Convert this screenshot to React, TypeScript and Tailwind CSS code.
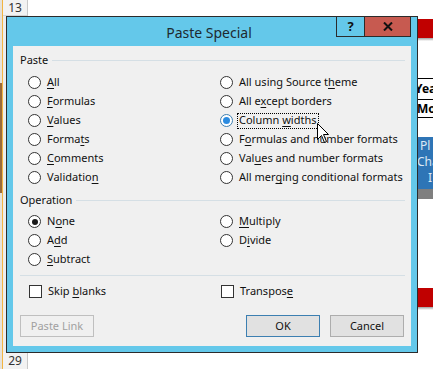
import React from "react";

const FONT = { fontFamily: '"Noto Sans", "Open Sans", sans-serif' };

type LabelParts = [string, string, string];

function Label({ parts, className = "" }: { parts: LabelParts; className?: string }) {
  return (
    <span className={"whitespace-nowrap " + className}>
      {parts[0]}
      <span className="underline underline-offset-[2px] decoration-[1px]">{parts[1]}</span>
      {parts[2]}
    </span>
  );
}

function Radio({
  parts,
  checked = false,
  hover = false,
  focus = false,
}: {
  parts: LabelParts;
  checked?: boolean;
  hover?: boolean;
  focus?: boolean;
}) {
  return (
    <div className="flex h-[19px] items-center">
      <div
        className={
          "flex h-[13px] w-[13px] shrink-0 items-center justify-center rounded-full border bg-white " +
          (hover ? "border-[#3c7fb1]" : "border-[#333333]")
        }
      >
        {checked && !hover && <div className="h-[6px] w-[6px] rounded-full bg-[#1a1a1a]" />}
        {hover && <div className="h-[7px] w-[7px] rounded-full bg-[#2b8be0]" />}
      </div>
      <div
        className={
          "ml-[4px] flex h-[16px] items-center px-[1px] " +
          (focus ? "border border-dotted border-black" : "border border-transparent")
        }
      >
        <Label parts={parts} />
      </div>
    </div>
  );
}

function Check({ parts }: { parts: LabelParts }) {
  return (
    <div className="flex h-[19px] items-center">
      <div className="h-[13px] w-[13px] shrink-0 border border-[#333333] bg-white" />
      <div className="ml-[4px] flex h-[16px] items-center border border-transparent px-[1px]">
        <Label parts={parts} />
      </div>
    </div>
  );
}

function GroupHeader({ text }: { text: string }) {
  return (
    <div className="flex h-[15px] items-center">
      <span className="pr-[4px]">{text}</span>
      <div className="h-px flex-1 bg-[#d5dfe5]" />
    </div>
  );
}

function Button({
  children,
  kind = "normal",
}: {
  children: React.ReactNode;
  kind?: "normal" | "default" | "disabled";
}) {
  const cls =
    kind === "default"
      ? "border-[#3c7fb1] bg-[#e1e1e1] text-[#111]"
      : kind === "disabled"
      ? "border-[#bfbfbf] bg-[#f0f0f0] text-[#a0a0a0]"
      : "border-[#adadad] bg-[#e1e1e1] text-[#111]";
  return (
    <div className={"flex h-[22px] w-[74px] items-center justify-center border " + cls}>
      {children}
    </div>
  );
}

function Dialog() {
  return (
    <div
      className="absolute left-[6px] top-[16px] flex h-[337px] w-[412px] flex-col border border-[#2b2b2b] bg-[#64c8ea] text-[11px] text-[#111]"
      style={FONT}
    >
      {/* Title bar */}
      <div className="flex h-[29px] shrink-0">
        <div className="flex-1 basis-0" />
        <div className="flex items-center pt-[2px] text-[14px] text-[#1e2a30]">Paste Special</div>
        <div className="flex flex-1 basis-0 items-start justify-end pr-[6px]">
          <div className="-mt-px flex h-[21px] w-[29px] items-center justify-center border border-[#2b2b2b] bg-[#64c8ea] text-[13px] font-bold text-[#111]">
            ?
          </div>
          <div className="-mt-px -ml-px flex h-[21px] w-[47px] items-center justify-center border border-[#2b2b2b] bg-[#c75a50]">
            <svg width="10" height="9" viewBox="0 0 10 9">
              <path d="M1 0.5 L9 8.5 M9 0.5 L1 8.5" stroke="#111" strokeWidth="2" />
            </svg>
          </div>
        </div>
      </div>

      {/* Content */}
      <div className="mx-[6px] mb-[6px] flex flex-1 flex-col bg-[#f0f0f0] pl-[7px] pr-[6px]">
        <div className="mt-[7px]">
          <GroupHeader text="Paste" />
        </div>
        <div className="mt-[5px] grid grid-cols-[192px_1fr] pl-[8px]">
          <div className="flex flex-col">
            <Radio parts={["", "A", "ll"]} />
            <Radio parts={["", "F", "ormulas"]} />
            <Radio parts={["", "V", "alues"]} />
            <Radio parts={["Forma", "t", "s"]} />
            <Radio parts={["", "C", "omments"]} />
            <Radio parts={["Validatio", "n", ""]} />
          </div>
          <div className="flex flex-col">
            <Radio parts={["All using Source t", "h", "eme"]} />
            <Radio parts={["All e", "x", "cept borders"]} />
            <Radio parts={["Column ", "w", "idths"]} hover focus checked />
            <Radio parts={["F", "o", "rmulas and number formats"]} />
            <Radio parts={["Val", "u", "es and number formats"]} />
            <Radio parts={["All mer", "g", "ing conditional formats"]} />
          </div>
        </div>

        <div className="mt-[6px]">
          <GroupHeader text="Operation" />
        </div>
        <div className="mt-[4px] grid grid-cols-[192px_1fr] pl-[8px]">
          <div className="flex flex-col">
            <Radio parts={["N", "o", "ne"]} checked />
            <Radio parts={["A", "d", "d"]} />
            <Radio parts={["", "S", "ubtract"]} />
          </div>
          <div className="flex flex-col">
            <Radio parts={["", "M", "ultiply"]} />
            <Radio parts={["D", "i", "vide"]} />
          </div>
        </div>

        <div className="mt-[6px] h-px bg-[#d5dfe5]" />

        <div className="mt-[6px] grid grid-cols-[192px_1fr] pl-[9px]">
          <Check parts={["Skip ", "b", "lanks"]} />
          <Check parts={["Transpos", "e", ""]} />
        </div>

        <div className="mt-[14px] flex items-center pr-px">
          <Button kind="disabled">Paste Link</Button>
          <div className="flex-1" />
          <Button kind="default">OK</Button>
          <div className="w-[10px]" />
          <Button>Cancel</Button>
        </div>
      </div>
    </div>
  );
}

function Cursor() {
  return (
    <svg
      className="absolute left-[317px] top-[123px]"
      width="13"
      height="21"
      viewBox="0 0 13 21"
    >
      <path
        d="M0.5 0.5 L0.5 16.5 L4.5 12.5 L7.5 19.5 L9.5 18.5 L6.5 11.5 L11.5 11.5 Z"
        fill="#ffffff"
        stroke="#000000"
        strokeWidth="1"
        strokeLinejoin="miter"
      />
    </svg>
  );
}

export default function App() {
  return (
    <div
      className="relative flex h-[369px] w-[433px] overflow-hidden bg-white"
      style={FONT}
    >
      {/* Left row-header strip */}
      <div className="flex w-[28px] shrink-0">
        <div className="flex w-[2px] flex-col bg-[#e6e2da]">
          <div className="h-[83px]" />
          <div className="h-[110px] bg-[#9a6a3a]" />
        </div>
        <div className="w-[1px] bg-[#f2b440]" />
        <div className="flex flex-1 flex-col border-r border-[#c8c8c8] bg-[#ececec]">
          <div className="flex h-[16px] items-center justify-center border-b border-[#d4d4d4] bg-[#f2f2f2] text-[12px] leading-[14px] text-[#333]">
            13
          </div>
          <div className="flex-1" />
          <div className="flex h-[17px] items-center justify-center bg-[#f2f2f2] text-[12px] leading-[14px] text-[#333]">
            29
          </div>
        </div>
      </div>

      <div className="flex-1" />

      {/* Right visible strip of the sheet */}
      <div className="flex w-[16px] shrink-0 flex-col text-[13px]">
        <div className="h-[19px]" />
        <div className="h-[19px] bg-[#c00000]" />
        <div className="h-[3px] bg-gradient-to-b from-[#a0a0a0] to-white" />
        <div className="h-[37px]" />
        <div className="h-px bg-black" />
        <div className="flex h-[20px] items-center overflow-hidden whitespace-nowrap font-bold text-black">
          <span className="-ml-[2px] text-[12px]">Yea</span>
        </div>
        <div className="h-px bg-black" />
        <div className="flex h-[17px] items-center overflow-hidden whitespace-nowrap font-bold text-black">
          <span className="text-[12px]">Mo</span>
        </div>
        <div className="h-px bg-black" />
        <div className="h-[19px]" />
        <div className="flex h-[52px] flex-col overflow-hidden bg-[#2e75b6] text-[12px] leading-[16px] text-[#dce9f5]">
          <div className="mt-[1px] whitespace-nowrap pl-[3px]">Pl</div>
          <div className="whitespace-nowrap">Cha</div>
          <div className="whitespace-nowrap pl-[11px]">I</div>
        </div>
        <div className="h-[10px] bg-[#7f7f7f]" />
        <div className="h-[89px]" />
        <div className="h-[19px] bg-[#c00000]" />
        <div className="h-[3px] bg-gradient-to-b from-[#a0a0a0] to-white" />
        <div className="flex-1" />
      </div>

      <Dialog />
      <Cursor />
    </div>
  );
}
